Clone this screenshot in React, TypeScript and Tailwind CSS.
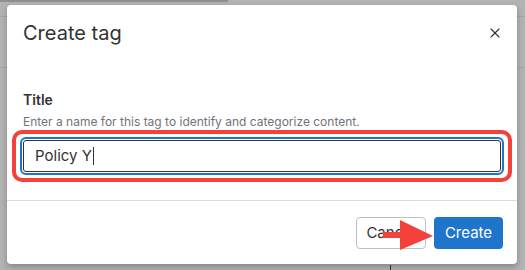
import { X } from 'lucide-react';

export default function App() {
  return (
    <div
      className="relative h-[270px] w-[525px] overflow-hidden bg-[#b3b3b3]"
      style={{ fontFamily: 'Inter, "Noto Sans", sans-serif' }}
    >
      {/* Page behind the overlay */}
      <div className="h-[17px] border-b border-[#a5a5a5]">
        <div className="h-[2px] w-[228px] bg-[#8f8f8f]" />
      </div>
      <div className="h-[51px] border-b border-[#a5a5a5]" />
      <div className="flex h-[202px] items-end pl-[390px]">
        <div className="h-[5px] w-px bg-[#333]" />
      </div>

      {/* Modal */}
      <div className="absolute left-[7px] top-[5px] flex h-[259px] w-[510px] flex-col rounded-[4px] bg-white shadow-[0_3px_6px_rgba(0,0,0,0.25)]">
        <div className="flex items-start justify-between px-4 pt-4">
          <h2 className="text-[20px] leading-6 text-[#333]">Create tag</h2>
          <button type="button" className="mr-[-2px] mt-1 text-[#333]">
            <X size={16} strokeWidth={1.6} />
          </button>
        </div>

        <div className="px-4 pt-[45px] pb-[28px]">
          <label className="block text-sm font-semibold leading-5 text-[#333]">Title</label>
          <p className="mt-1 text-[12px] leading-4 text-[#737278]">
            Enter a name for this tag to identify and categorize content.
          </p>
          <div className="relative mt-[10px]">
            <div className="flex h-8 items-center rounded-[3px] border border-[#333] px-[11px] text-[15px] text-[#333] outline-2 outline-offset-1 outline-[#1f75cb]">
              Policy Y
              <span className="ml-[1px] h-[18px] w-px bg-[#333]" />
            </div>
            <div className="pointer-events-none absolute -inset-x-[11px] -inset-y-[10px] rounded-[10px] border-4 border-[#f4413a]" />
          </div>
        </div>

        <div className="relative flex flex-1 items-start justify-end gap-2 border-t border-[#dcdcde] px-4 pt-4">
          <button
            type="button"
            className="h-8 w-[70px] rounded-[4px] border border-[#bfbfc3] bg-white text-[15px] text-[#333]"
          >
            Cancel
          </button>
          <button
            type="button"
            className="mr-[-2px] h-8 w-[69px] rounded-[4px] bg-[#1f75cb] text-[15px] text-white"
          >
            Create
          </button>
          <svg
            className="pointer-events-none absolute left-[376px] top-[18px]"
            width="52"
            height="32"
            viewBox="0 0 52 32"
          >
            <rect x="0" y="13" width="22" height="6" fill="#f4413a" />
            <polygon points="17,1 50,17 17,31" fill="#f4413a" />
          </svg>
        </div>
      </div>
    </div>
  );
}
